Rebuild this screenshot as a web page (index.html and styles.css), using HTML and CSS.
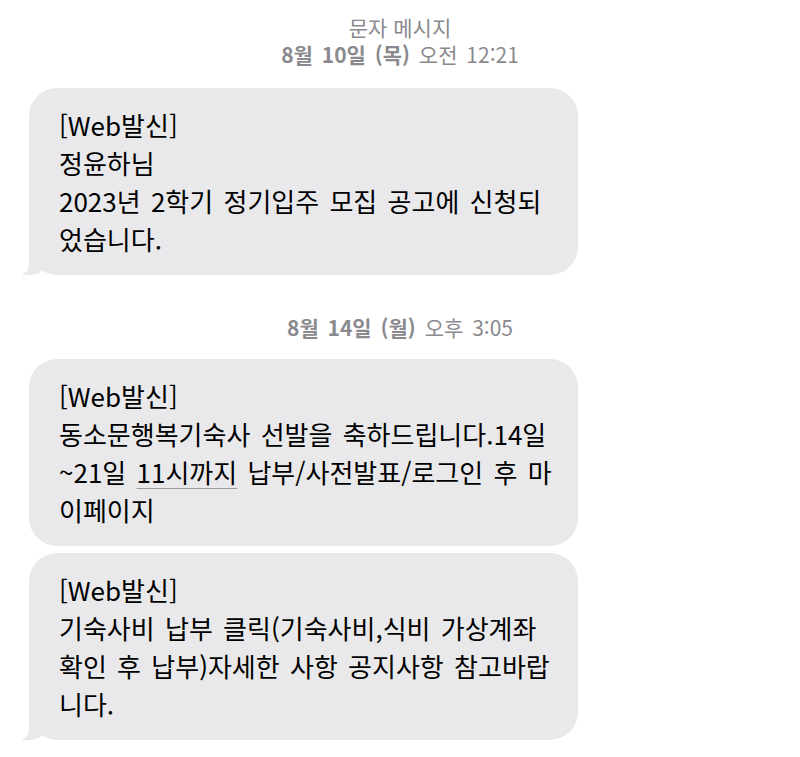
FILE: index.html
```html
<!DOCTYPE html>
<html lang="ko">
<head>
    <meta charset="UTF-8">
    <meta name="viewport" content="width=device-width, initial-scale=1.0">
    <title>문자 메시지</title>
    <link rel="stylesheet" href="styles.css">
</head>
<body>
    <main class="thread">
        <header class="thread-head">
            <p class="service">문자 메시지</p>
            <p class="stamp"><b>8월 10일 (목)</b> 오전 12:21</p>
        </header>
        <div class="bubble tail">
            [Web발신]<br>
            정윤하님<br>
            2023년 2학기 정기입주 모집 공고에 신청되<br>
            었습니다.
        </div>
        <p class="stamp later"><b>8월 14일 (월)</b> 오후 3:05</p>
        <div class="group">
            <div class="bubble">
                [Web발신]<br>
                동소문행복기숙사 선발을 축하드립니다.14일<br>
                ~21일 <span class="link">11시까지</span> 납부/사전발표/로그인 후 마<br>
                이페이지
            </div>
            <div class="bubble tail">
                [Web발신]<br>
                기숙사비 납부 클릭(기숙사비,식비 가상계좌<br>
                확인 후 납부)자세한 사항 공지사항 참고바랍<br>
                니다.
            </div>
        </div>
    </main>
</body>
</html>
```

FILE: styles.css
```css
:root {
    font-family: "Noto Sans CJK KR", "Noto Sans", sans-serif;
    color: #000000;
    background-color: #ffffff;
}
body {
    margin: 0;
}
.thread {
    display: flex;
    flex-direction: column;
    padding: 14px 0 0 29px;
    width: 549px;
}
.thread-head {
    display: flex;
    flex-direction: column;
    align-items: center;
    width: 742px;
}
.service, .stamp {
    margin: 0;
    font-size: 21px;
    line-height: 27px;
    color: #8a8a8e;
    white-space: nowrap;
}
.stamp {
    word-spacing: 3px;
}
.stamp b {
    font-weight: 600;
}
.stamp.later {
    align-self: flex-start;
    width: 742px;
    text-align: center;
    margin: 39px 0 18px;
}

.bubble {
    position: relative;
    background-color: #e9e9eb;
    border-radius: 28px;
    padding: 18px 20px 17px 30px;
    font-size: 26px;
    line-height: 38px;
    word-spacing: 3px;
    white-space: nowrap;
}
.thread-head + .bubble {
    margin-top: 20px;
}
.group {
    display: flex;
    flex-direction: column;
    gap: 7px;
}
.link {
    text-decoration: underline;
    text-decoration-color: #9a9a9e;
    text-decoration-thickness: 1px;
    text-underline-offset: 5px;
}

/* the little hook under the last bubble */
.tail::before, .tail::after {
    content: "";
    position: absolute;
    bottom: 0;
    height: 25px;
}
.tail::before {
    left: -7px;
    width: 24px;
    background-color: #e9e9eb;
    border-bottom-right-radius: 16px 14px;
}
.tail::after {
    left: -26px;
    width: 26px;
    background-color: #ffffff;
    border-bottom-right-radius: 10px;
}
```
